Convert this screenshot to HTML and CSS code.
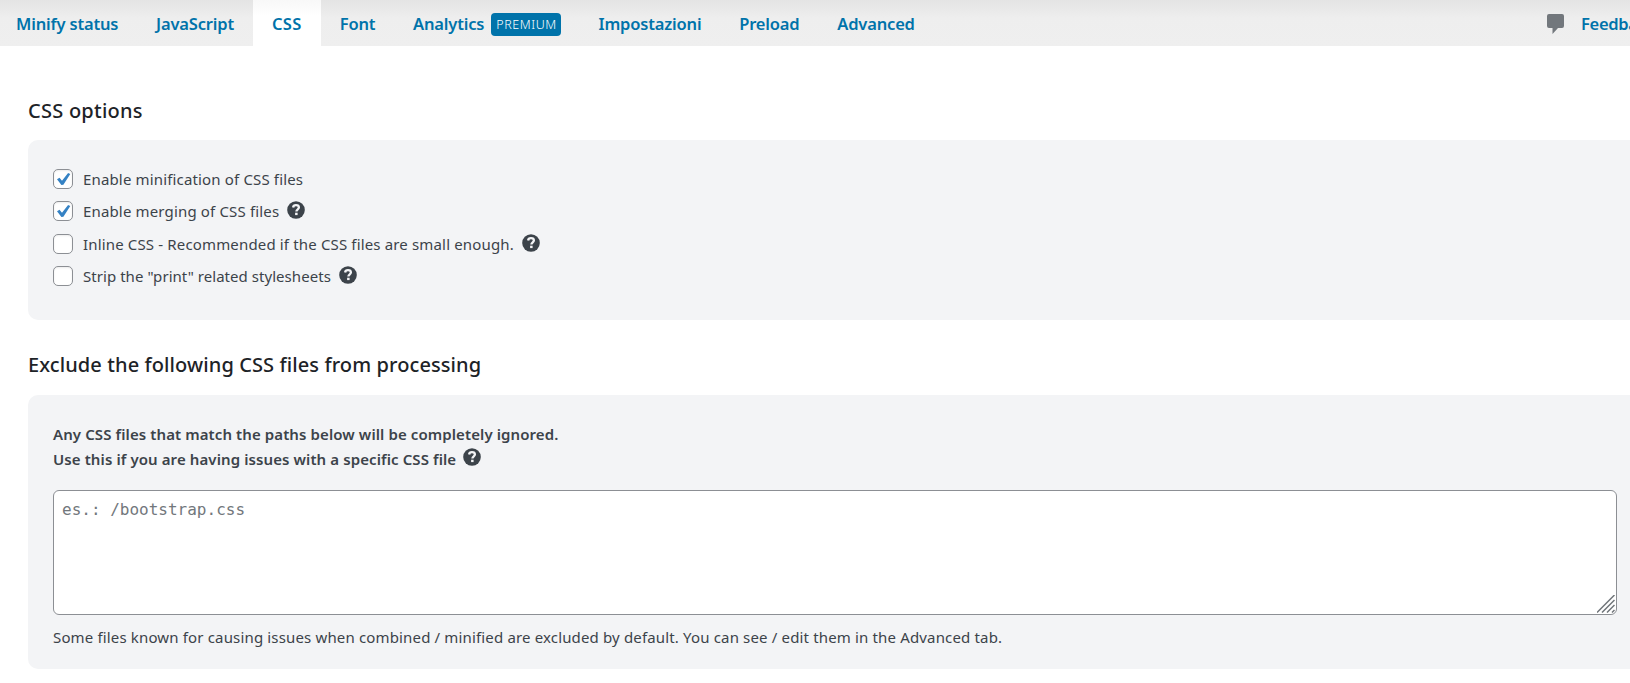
FILE: index.html
```html
<!DOCTYPE html>
<html lang="it">
<head>
<meta charset="utf-8">
<title>CSS options</title>
<link rel="stylesheet" href="styles.css">
</head>
<body>
<svg class="defs" width="0" height="0">
  <symbol id="help" viewBox="0 0 18 18">
    <circle cx="9" cy="9" r="8.8" fill="#3c434a"/>
    <path d="M6.100 6.500C6.300 4.900 7.500 4.200 9 4.200c1.700 0 2.900.8 2.900 2.300C11.900 8.300 9.400 8.300 9.400 10.500" fill="none" stroke="#f3f4f6" stroke-width="2.300"/>
    <rect x="8.100" y="11.700" width="2.500" height="2.400" fill="#f3f4f6"/>
  </symbol>
  <symbol id="check" viewBox="0 0 20 20">
    <path d="M4 10.300 6.500 8.800 9 11.700 15.100 3.900 17.300 5.100 10.400 15.800 8.400 16Z" fill="#3582c4"/>
  </symbol>
</svg>
<nav class="tabs">
  <a class="tab">Minify status</a>
  <a class="tab">JavaScript</a>
  <a class="tab active">CSS</a>
  <a class="tab">Font</a>
  <a class="tab">Analytics<span class="premium">PREMIUM</span></a>
  <a class="tab">Impostazioni</a>
  <a class="tab">Preload</a>
  <a class="tab">Advanced</a>
  <a class="feedback"><svg width="17" height="21" viewBox="0 0 17 21"><path d="M2 0h13q2 0 2 2v10q0 2-2 2h-4l-5.500 6v-6H2q-2 0-2-2V2q0-2 2-2z" fill="#72777c"/></svg>Feedback</a>
</nav>
<main class="content">
  <h2 class="title">CSS options</h2>
  <section class="panel options">
    <label class="option"><span class="box"><svg width="20" height="20"><use href="#check"/></svg></span>Enable minification of CSS files</label>
    <label class="option"><span class="box"><svg width="20" height="20"><use href="#check"/></svg></span>Enable merging of CSS files<svg class="help"><use href="#help"/></svg></label>
    <label class="option"><span class="box"></span>Inline CSS - Recommended if the CSS files are small enough.<svg class="help"><use href="#help"/></svg></label>
    <label class="option print"><span class="box"></span>Strip the "print" related stylesheets<svg class="help"><use href="#help"/></svg></label>
  </section>
  <h2 class="title second">Exclude the following CSS files from processing</h2>
  <section class="panel exclude">
    <div class="lead">Any CSS files that match the paths below will be completely ignored.</div>
    <div class="lead">Use this if you are having issues with a specific CSS file<svg class="help"><use href="#help"/></svg></div>
    <div class="field">
      <textarea class="paths" placeholder="es.: /bootstrap.css"></textarea>
      <svg class="grip" width="18" height="18" viewBox="0 0 18 18"><path d="M0 17.500 17.500 0M5 17.500 17.500 5M10 17.500 17.500 10M15 17.500 17.500 15" stroke="#70757a" stroke-width="1.500"/></svg>
    </div>
    <p class="note">Some files known for causing issues when combined / minified are excluded by default. You can see / edit them in the Advanced tab.</p>
  </section>
</main>
</body>
</html>
```
FILE: styles.css
```css
* { box-sizing: border-box; }
body {
  margin: 0;
  background: #fff;
  color: #3c434a;
  font: 15px "Noto Sans", "Open Sans", sans-serif;
  letter-spacing: .155px;
  overflow: hidden;
}
.defs { position: absolute; }
.tabs {
  display: flex;
  height: 46px;
  background: linear-gradient(#e4e4e4, #eee 18px, #efefef);
  color: #0073aa;
  font-size: 16.5px;
  font-weight: 600;
  letter-spacing: -.17px;
  line-height: 48px;
  white-space: nowrap;
}
.tab { display: flex; align-items: center; height: 48px; padding: 0 18.9px; }
.tab:first-child { padding-left: 16px; }
.tab.active {
  height: 46px;
  padding: 2px 19px 0;
  background: linear-gradient(#f8f8f8, #fff 16px);
  letter-spacing: .4px;
}
.premium {
  height: 23px;
  margin-left: 7px;
  padding: 0 4px 0 5px;
  border-radius: 4px;
  background: #0073aa;
  color: #fff;
  font-size: 12.5px;
  font-weight: 300;
  letter-spacing: .55px;
  line-height: 24px;
}
.feedback {
  display: flex;
  flex: 0 0 83px;
  gap: 17px;
  min-width: 0;
  margin-left: auto;
  letter-spacing: -.3px;
}
.feedback svg { flex: none; margin-top: 14px; }
.content { padding-left: 28px; }
.title {
  margin: 0;
  padding-top: 50px;
  color: #1d2327;
  font-size: 20px;
  font-weight: 550;
  letter-spacing: .25px;
  line-height: 30px;
}
.title::after { content: ""; display: block; height: 14px; }
.title.second { padding-top: 30px; letter-spacing: .1px; }
.title.second::after { height: 15px; }
.panel { width: 1620px; border-radius: 10px; background: #f3f4f6; }
.options { height: 180px; padding: 23px 25px 27px; }
.option { display: flex; align-items: center; height: 32px; }
.option:nth-child(3) { margin-top: 1px; }
.print { letter-spacing: .05px; }
.box {
  width: 20px;
  height: 20px;
  margin-right: 10px;
  border: 1px solid #8c8f94;
  border-radius: 5px;
  background: #fff;
  box-shadow: inset 0 1px 2px rgba(0, 0, 0, .08);
}
.box svg { display: block; margin: -1px; }
.help { width: 18px; height: 18px; margin: -2px 0 0 8px; }
.exclude { height: 274px; padding: 26px 25px 0; }
.lead {
  display: flex;
  align-items: center;
  height: 25px;
  font-weight: 600;
  letter-spacing: .1px;
}
.lead .help { margin: -3px 0 0 7px; }
.field { position: relative; width: 1564px; margin-top: 19px; }
.paths {
  display: block;
  width: 100%;
  height: 125px;
  padding: 8px;
  border: 1px solid #8c8f94;
  border-radius: 6px;
  background: #fff;
  font: 16px/22px "DejaVu Sans Mono", monospace;
  letter-spacing: 0;
  resize: none;
}
.paths::placeholder { color: #72777c; }
.grip { position: absolute; right: 2px; bottom: 2px; }
.note { margin: 9px 0 0; line-height: 26px; }
```
